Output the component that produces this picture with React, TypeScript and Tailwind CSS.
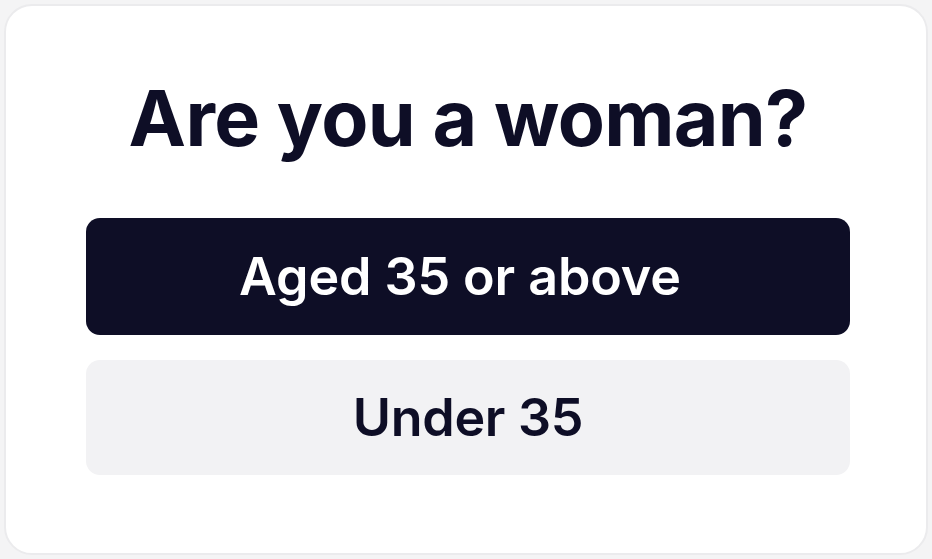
export default function App() {
  return (
    <div className="h-[559px] w-[932px] bg-[#f4f4f5] p-[4px] font-['Inter',sans-serif]">
      <div className="flex h-full flex-col items-center rounded-[28px] border-2 border-[#ebebed] bg-white pl-[84px] pr-[80px] pt-[58px]">
        <h1 className="text-[77px] font-bold leading-[108px] tracking-[-0.7px] text-[#0e0e26]">Are you a woman?</h1>
        <button className="mt-[46px] flex h-[117px] w-[764px] items-center justify-center rounded-[14px] bg-[#0e0e26] pr-[16px] text-[52px] font-semibold tracking-[-0.1px] text-white">
          Aged 35 or above
        </button>
        <button className="mt-[25px] flex h-[115px] w-[764px] items-center justify-center rounded-[14px] bg-[#f2f2f4] text-[52px] font-semibold tracking-[-0.3px] text-[#0e0e26]">
          Under 35
        </button>
      </div>
    </div>
  );
}
